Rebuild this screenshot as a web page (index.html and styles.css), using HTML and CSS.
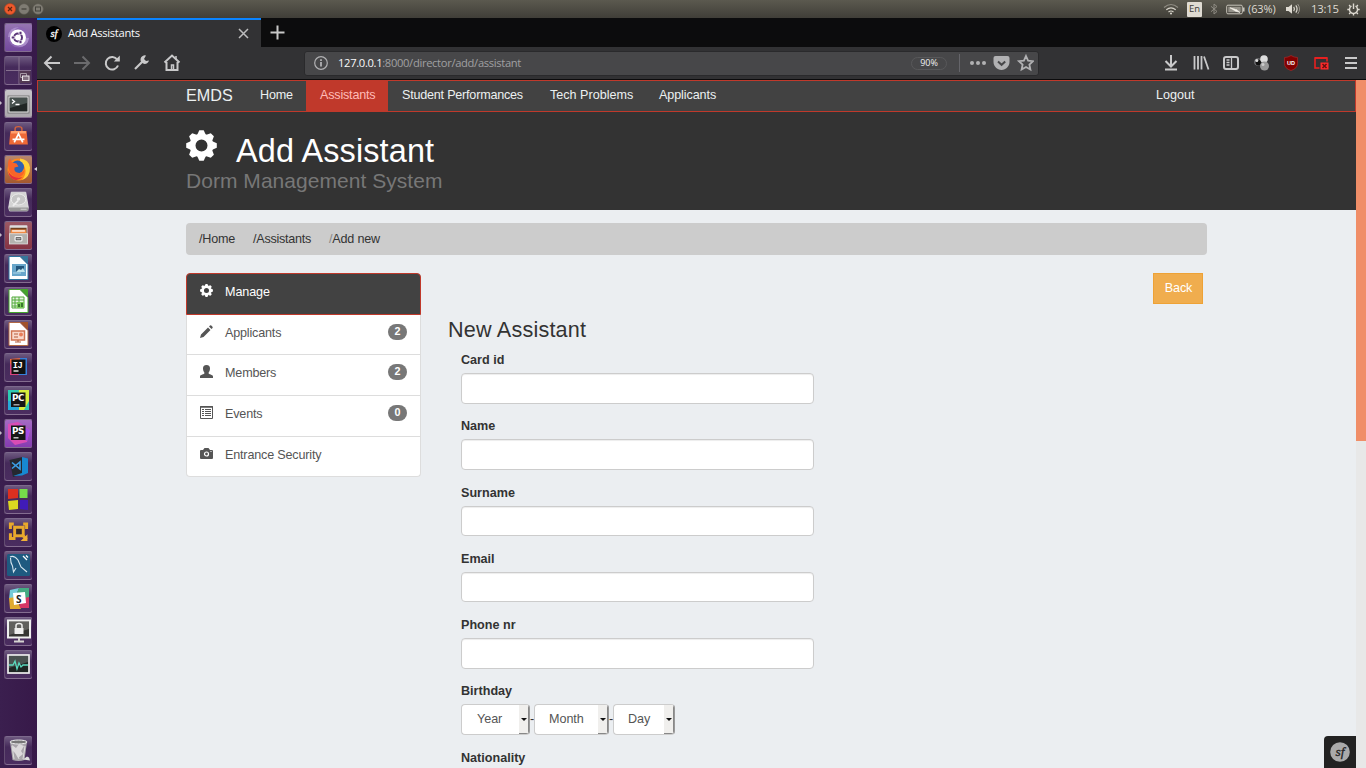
FILE: index.html
```html
<!DOCTYPE html>
<html lang="en">
<head>
<meta charset="utf-8">
<title>Add Assistants</title>
<link rel="stylesheet" href="styles.css">
</head>
<body>
<svg class="defs" aria-hidden="true">
  <symbol id="cog" viewBox="0 0 31 31">
    <circle cx="15.5" cy="15.5" r="8.9" fill="none" stroke="currentColor" stroke-width="5.8"/>
    <g fill="currentColor">
      <path id="tooth" d="M11 5.2 13.3 .2h4.400l2.300 5z"/>
      <use href="#tooth" transform="rotate(45 15.5 15.5)"/><use href="#tooth" transform="rotate(90 15.5 15.5)"/>
      <use href="#tooth" transform="rotate(135 15.5 15.5)"/><use href="#tooth" transform="rotate(180 15.5 15.5)"/>
      <use href="#tooth" transform="rotate(225 15.5 15.5)"/><use href="#tooth" transform="rotate(270 15.5 15.5)"/>
      <use href="#tooth" transform="rotate(315 15.5 15.5)"/>
    </g>
  </symbol>
</svg>
<div class="panel">
  <div class="winbtns">
    <svg width="46" height="18" viewBox="0 0 46 18"><circle cx="10" cy="9" r="5.5" fill="#ee5a2c" stroke="#b8401c" stroke-width=".6"/><path d="M8 7l4 4M12 7l-4 4" stroke="#5b2512" stroke-width="1.2"/><circle cx="24" cy="9" r="5.3" fill="#7f7c73" stroke="#5e5b53" stroke-width=".6"/><path d="M21.5 9h5" stroke="#45433d" stroke-width="1.3"/><circle cx="38" cy="9" r="5.3" fill="#7f7c73" stroke="#5e5b53" stroke-width=".6"/><rect x="35.5" y="7" width="5" height="4" fill="none" stroke="#45433d"/></svg>
  </div>
  <div class="tray">
    <svg width="16" height="12" viewBox="0 0 16 12" fill="none" stroke-width="1.2"><path d="M1 4.5q7-6 14 0" stroke="#8f8c83"/><path d="M3.3 6.8q4.7-4 9.4 0M5.5 9q2.5-2 5 0" stroke="#d8d4ca"/><circle cx="8" cy="10.6" r="1" fill="#dfdbd2"/></svg>
    <span class="lang">En</span>
    <svg class="bt" width="8" height="12" viewBox="0 0 8 12" fill="none" stroke="#8f8c83"><path d="M1 3.3l6 5.2-3 2.5V1l3 2.5-6 5.2"/></svg>
    <svg class="bat" width="19" height="11" viewBox="0 0 19 11"><rect x=".7" y="1.2" width="15.6" height="8.6" rx="1.2" fill="none" stroke="#c9c5bb" stroke-width="1"/><rect x="2.3" y="2.8" width="12.400" height="5.4" fill="#96938a"/><path d="M17.8 3.5v4" stroke="#dfdbd2" stroke-width="1.3"/><path d="M4 3.800l5 1.400v1.800l5 1.500-4-3.300-1.500 1.300z" fill="#f5f2ea" stroke="#f5f2ea" stroke-width=".6"/></svg>
    <span class="pct">(63%)</span>
    <svg class="vol" width="16" height="12" viewBox="0 0 16 12"><path d="M1 4h2.5L7 1.2v9.6L3.5 8H1z" fill="#dfdbd2"/><path d="M8.7 3.8q1.5 2.2 0 4.4M10.8 2.4q2.6 3.6 0 7.2" stroke="#dfdbd2" stroke-width="1.2" fill="none"/><path d="M12.7 1q3.6 5 0 10" stroke="#99958c" fill="none"/></svg>
    <span class="clock">13:15</span>
    <svg class="pow" width="13" height="13" viewBox="0 0 13 13" fill="none" stroke="#dfdbd2"><path d="M4.5 3a4 4 0 1 0 4 0" stroke-width="1.400"/><path d="M6.5.5v5.5" stroke-width="1.400"/><path d="M.3 6.5h2M10.7 6.5h2M6.5 10.6v2M2.1 2.1l1.3 1.3M10.9 2.1L9.6 3.4M2.1 10.9l1.4-1.4M10.9 10.9L9.5 9.5" stroke-width="1.400"/></svg>
  </div>
</div>
<div class="desktop">
<aside class="launcher">
  <div class="tile ubuntu"><svg viewBox="0 0 27 29"><circle cx="13.5" cy="14" r="10.5" fill="#8e68b4"/><path d="M3 14Q4 4 14 4q-7 3-7 10M24 15q-1 9-11 9 7-3 7-9" fill="#aa8dc9"/><circle cx="13" cy="14.5" r="8" fill="#fff"/><circle cx="13" cy="14.5" r="4" fill="none" stroke="#593477" stroke-width="2"/><g fill="#593477" stroke="#fff" stroke-width=".8"><circle cx="8" cy="14.5" r="1.7"/><circle cx="15.5" cy="10" r="1.7"/><circle cx="15.5" cy="19" r="1.7"/></g></svg></div>
  <div class="tile"><svg viewBox="0 0 27 29"><path d="M14 1v27M1 14.5h25" stroke="#86708e"/><rect x="14.5" y="15" width="11" height="12" fill="#523852"/><path d="M15.5 17.5h6v4h-6z" fill="none" stroke="#a598a4"/><rect x="17.5" y="20" width="6.5" height="4.5" fill="#827181" stroke="#ece7e9"/></svg></div>
  <div class="tile light run"><svg viewBox="0 0 27 29"><rect x="3" y="7" width="21" height="17" fill="#eee" stroke="#777"/><rect x="4.5" y="8.5" width="18" height="14" fill="#202624"/><path d="M5 9h17v5L5 19z" fill="#46504d"/><path d="M7 10.5l2.5 2L7 14.5M10.5 15.5h4" fill="none" stroke="#fff" stroke-width="1.3"/></svg></div>
  <div class="tile"><svg class="snug" viewBox="0 0 27 29"><path d="M9.5 9V6q0-2.5 4-2.5t4 2.5v3" fill="none" stroke="#d4633c" stroke-width="1.7"/><path d="M4 8.5h19l1.5 16h-22z" fill="#ee6937"/><path d="M5 8.5h17l.5 3h-18z" fill="#ffa06e"/><path d="M8.500 22l5-10 5 10M6.5 18.5h14" stroke="#fff" stroke-width="2" fill="none"/></svg></div>
  <div class="tile fox run active"><svg viewBox="0 0 27 29"><circle cx="13.500" cy="14.500" r="11" fill="#ff8a1c"/><path d="M15 3.500q9 1 10 9 0 10-8 12.500 5-6 3-12-1-4-5-5z" fill="#ffd138"/><circle cx="12.500" cy="12" r="6.500" fill="#2c62b4"/><path d="M3 8q0-3 2-4.500l2 4 4.500 1 2 3-4 1q-1 5 5 5.500 3-.5 5-3-1 7-7 7.500Q3 21 3 8" fill="#f8642a"/><path d="M3 12q-.5 6 4.500 9t10 1q-4 4.500-9 2.500-6-3-5.500-12.500" fill="#e3303c"/></svg></div>
  <div class="tile"><svg class="snug" viewBox="0 0 27 29"><path d="M5 3h17l3 18-1 4H3l-1-4z" fill="#d4d4d4" stroke="#e6e6e6"/><ellipse cx="13.500" cy="11.500" rx="8.500" ry="6.500" fill="#c6c6c6" stroke="#eee"/><circle cx="13.500" cy="11" r="2" fill="#eee"/><path d="M2 21h23v4H3z" fill="#999"/><path d="M16 23h7" stroke="#ddd"/><path d="M13 13l-6 6" stroke="#eee" stroke-width="2"/></svg></div>
  <div class="tile files run"><svg class="snug" viewBox="0 0 27 29"><rect x="3" y="3" width="21" height="21" rx="1" fill="#ddd"/><path d="M4 6h19v7H4z" fill="#714120"/><path d="M5 8h17l1 6H4z" fill="#f08b45"/><path d="M6 9h15v1.500H6z" fill="#fff"/><rect x="3" y="13" width="21" height="12" fill="#b3b2ae" stroke="#ddd"/><rect x="9.500" y="16.500" width="8" height="5" rx="1" fill="#444" stroke="#f2f2f2" stroke-width="1.500"/><path d="M11 19h5" stroke="#fff"/></svg></div>
  <div class="tile"><svg viewBox="0 0 27 29"><path d="M4 2.500h11l8 8v15H4z" fill="#fff" stroke="#2c759e"/><path d="M15 2h8v8z" fill="#36769b"/><rect x="7" y="10" width="14" height="12" fill="#68a6ca"/><path d="M11 12h8v6h-8z" fill="#23557b"/><path d="M11 18l3-3 2 1 2-2 2 4z" fill="#c0e5eb"/><path d="M8 19h8" stroke="#b0d6e9"/></svg></div>
  <div class="tile"><svg viewBox="0 0 27 29"><path d="M4 2.500h11l8 8v15H4z" fill="#fff" stroke="#43a52c"/><path d="M15 2h8v8z" fill="#44a52c"/><path d="M7 10h12v11H7z" fill="#e7f3e1" stroke="#52aa3d"/><path d="M7 13h12M7 16h12M7 19h12M10 10v11M14 10v11" stroke="#52aa3d"/><path d="M12 15h7v6h-7z" fill="#79ca57"/><path d="M14 20v-3m3 3v-4" stroke="#245c22" stroke-width="1.500"/></svg></div>
  <div class="tile"><svg viewBox="0 0 27 29"><path d="M4 2.500h11l8 8v15H4z" fill="#fff" stroke="#b16844"/><path d="M15 2h8v8z" fill="#a1532c"/><rect x="6.500" y="11" width="13" height="9" fill="#f9d8cb" stroke="#cf7351" stroke-width="1.500"/><path d="M9 14h4M9 17h4M13 20v2M10 22h6" stroke="#b35c3c"/><circle cx="16" cy="14.500" r="2" fill="#e87e5a"/></svg></div>
  <div class="tile"><svg viewBox="0 0 27 29"><path d="M5 6l11-1 6 7-6 10-11-1z" fill="#f36c42"/><path d="M15 5h7v17h-9z" fill="#387fda"/><path d="M5 10v12h9z" fill="#d8437f"/><rect x="6.500" y="6.500" width="14" height="14.500" fill="#111"/><text x="7.800" y="14.500" class="ide ij">IJ</text><path d="M8.500 18h5" stroke="#fff" stroke-width="1.300"/></svg></div>
  <div class="tile"><svg viewBox="0 0 27 29"><path d="M3 4h21v20H3z" fill="#2dcbb3"/><path d="M14 4h10v11l-5 9h-7z" fill="#d8ee3b"/><path d="M3 15h11v9H3z" fill="#27a9d9"/><rect x="6" y="6.500" width="14.500" height="14.500" fill="#161616"/><text x="7" y="15" class="ide">PC</text><path d="M8.500 18.800h6" stroke="#bbb" stroke-width="1.300"/></svg></div>
  <div class="tile ps run"><svg viewBox="0 0 27 29"><path d="M3 5l10-2 12 8-3 12-12 3L3 19z" fill="#d94cb4"/><path d="M14 5l11 6-3 11-11-6z" fill="#a34ce8"/><rect x="6" y="6.500" width="14.500" height="14.500" fill="#161616"/><text x="7" y="14.800" class="ide">PS</text><path d="M8.500 18.800h5" stroke="#ddd" stroke-width="1.300"/></svg></div>
  <div class="tile"><svg viewBox="0 0 27 29"><path d="M4.500 8l13-3v17L8 25z" fill="#252830"/><path d="M17 5l6 1.500v14.500l-6 2.500-9 .5 9-3z" fill="#1788d1"/><path d="M7 10.500l8 6.500V10l-8 6.500" fill="none" stroke="#3c9ee5" stroke-width="1.600"/></svg></div>
  <div class="tile"><svg viewBox="0 0 27 29"><path d="M3 4h10v9L3 14z" fill="#dc3020"/><path d="M14.500 4h8v9h-8z" fill="#76dc4a"/><path d="M3 16l10-1v9l-9 1z" fill="#dcd820"/><path d="M15 15h8v10l-8-1z" fill="#401bb8"/></svg></div>
  <div class="tile"><svg class="snug" viewBox="0 0 27 29"><g fill="none" stroke="#e8a92c" stroke-width="3.500"><path d="M9 9h10v10H9z"/><path d="M8 5H4v6M19 5h4v6M4 16v6h6M19 19l4 4"/></g><path d="M24 17v8h-8z" fill="#f0b038"/><path d="M11 11h6v6h-6z" fill="#352a27"/></svg></div>
  <div class="tile"><svg viewBox="0 0 27 29"><rect x="2" y="3" width="23" height="22" rx="1.500" fill="#1e5a80"/><path d="M5 6q4-2 8 3l3 7 6 5M5.500 7q0 5 2 8l1 6 2.500-4" fill="none" stroke="#d6e6ef" stroke-width="1.100"/><path d="M18 5l4 4M21 4.500l2 2" stroke="#fff" stroke-width="1.300"/></svg></div>
  <div class="tile"><svg viewBox="0 0 27 29"><path d="M5 6l9-2-4 10-6 1z" fill="#76cad8"/><path d="M14 4h10v11L10 14z" fill="#45ab83"/><path d="M4 14l7-1 5 12H5z" fill="#e1aa30"/><path d="M14 15l10-2v11h-9z" fill="#d63665"/><path d="M8 9l12-1 1 11-12 2z" fill="#fff"/><text x="11" y="18.500" class="slack">S</text></svg></div>
  <div class="tile"><svg viewBox="0 0 27 29"><rect x="3" y="3.500" width="22" height="17" fill="#353533" stroke="#eee" stroke-width="2"/><path d="M4 5h20v7L4 18z" fill="#60605e"/><rect x="9.500" y="11" width="9" height="6" fill="#eee"/><path d="M11 11V8.500Q11 6.500 14 6.500t3 2V11" fill="none" stroke="#eee" stroke-width="1.500"/><path d="M14 21v3M9 24.500h10" stroke="#d5d3d1" stroke-width="2"/></svg></div>
  <div class="tile"><svg viewBox="0 0 27 29"><rect x="3" y="5" width="21" height="18" fill="#1e2523" stroke="#eee" stroke-width="1.700"/><path d="M4 6h19v6L4 18z" fill="#49514f"/><path d="M4 15h4l2-4 2 8 2-6 2 4 2-2h5" fill="none" stroke="#5bd8bd" stroke-width="1.300"/></svg></div>
  <div class="tile trash"><svg viewBox="0 0 27 29"><path d="M5 6h17l-2.500 18q-6 2-12 0z" fill="#a9a5aa"/><ellipse cx="13.500" cy="6" rx="8.500" ry="2" fill="#777" stroke="#eee"/><path d="M7 9l4 3 3-4 5 2-3 5 2 3-5 4-3-5-2-2z" fill="#e5e2e4" opacity=".85"/><path d="M7 10l2 13M20 10l-2 13M12 17l2 6" stroke="#ddd"/><path d="M18 23.500l4-3 2 1 1 3z" fill="#ddd"/></svg></div>
</aside>
<main class="browser">
  <div class="tabs">
    <div class="tab">
      <svg class="sf" width="16" height="16" viewBox="0 0 16 16"><circle cx="8" cy="8" r="8" fill="#000"/><text x="8" y="11" text-anchor="middle">sf</text></svg>
      <span class="tabname">Add Assistants</span>
      <svg class="x" width="11" height="11" viewBox="0 0 11 11"><path d="M1 1l9 9M10 1l-9 9" stroke="#bdbdbe" stroke-width="1.500"/></svg>
    </div>
    <svg class="plus" width="15" height="15" viewBox="0 0 15 15"><path d="M7.500 .5v14M.5 7.500h14" stroke="#c8c8c8" stroke-width="2"/></svg>
  </div>
  <div class="toolbar">
    <svg class="nav" width="150" height="32" viewBox="0 0 150 32" fill="none" stroke="#c9c9ca" stroke-width="2"><path d="M23 16H9M14.500 9.500L8 16l6.500 6.500"/><path d="M37 16h14M45.500 9.500L52 16l-6.500 6.500" stroke="#6b6b6d"/><path d="M81 18.500a6.300 6.300 0 1 1-.7-5.800"/><path d="M82.800 8.500v6h-6z" fill="#c9c9ca" stroke="none"/><path d="M98 22l7-7" stroke-width="2.200"/><path d="M109 8.500a4.300 4.300 0 1 0 3 5l-3 .5-2-2z" fill="#c9c9ca" stroke="none"/><path d="M127.500 15.500L135 8.500l7.500 7M129.500 15v8h11v-8"/><path d="M134.500 23v-5h2v5M139 12V9" stroke-width="1.500"/></svg>
    <div class="url">
      <svg width="14" height="14" viewBox="0 0 14 14"><circle cx="7" cy="7" r="6.300" fill="none" stroke="#b1b1b3" stroke-width="1.200"/><path d="M7 6v4.500M7 3.200v1.700" stroke="#b1b1b3" stroke-width="1.800"/></svg>
      <span class="address"><b>127.0.0.1</b>:8000/director/add/assistant</span>
      <span class="zoom">90%</span>
      <svg class="urlicons" width="80" height="24" viewBox="0 0 80 24"><path d="M5.500 3v18" stroke="#65656a"/><g fill="#b1b1b3"><circle cx="18" cy="12" r="2"/><circle cx="24" cy="12" r="2"/><circle cx="30" cy="12" r="2"/><path d="M41.500 5h12q2 0 2 2v4c0 4-3.500 8-8 8s-8-4-8-8V7q0-2 2-2z"/></g><path d="M44 10.500l3.600 3.300 3.600-3.300" fill="none" stroke="#474749" stroke-width="2"/><path d="M72 5l2.100 4.600 5 .6-3.700 3.400 1 4.900-4.400-2.500-4.400 2.500 1-4.900-3.700-3.400 5-.6z" fill="none" stroke="#b1b1b3" stroke-width="1.800"/></svg>
    </div>
    <svg class="exts" width="196" height="32" viewBox="0 0 196 32" fill="none" stroke="#c9c9ca" stroke-width="2"><path d="M7 8v11M1.500 14L7 19.500 12.500 14M1 22.500h12"/><path d="M30.500 9v13.500M34 9v13.500M37.500 9v13.500M40 9.500l4.500 13" stroke-width="1.800"/><rect x="60" y="10" width="14" height="12" rx="2"/><path d="M67.500 10v12M62.500 13h3M62.500 15.500h3M62.500 18h3" stroke-width="1.300"/><g stroke="none"><circle cx="94" cy="15" r="3.800" fill="#77777a"/><circle cx="94.500" cy="15.500" r="3" fill="#111"/><circle cx="92.800" cy="13.500" r="1.500" fill="#ddd"/><circle cx="100" cy="12" r="3.800" fill="#ddd"/><circle cx="100.500" cy="19" r="4.500" fill="#999"/><circle cx="99" cy="17.500" r="1.500" fill="#ccc"/></g><path d="M127 8.500q-3 2-6.500 2v6q0 5 6.500 7 6.500-2 6.500-7v-6q-3.500 0-6.500-2z" fill="#800000" stroke="#a12626" stroke-width=".8"/><text x="127" y="18" class="ub">UD</text><rect x="151" y="11" width="12" height="10" stroke="#e82020" stroke-width="1.600"/><path d="M151 11h12" stroke="#e82020" stroke-width="2"/><path d="M156 15h9v8h-9z" fill="#ff2a2a" stroke="#323234" stroke-width="1"/><path d="M158.500 17l4 4M162.500 17l-4 4" stroke="#651010" stroke-width="1.500"/><path d="M181 11h12M181 16h12M181 21h12"/></svg>
  </div>
  <div class="viewport">
    <div class="page">
      <nav class="navbar"><span class="brand">EMDS</span><span class="n1">Home</span><span class="n2">Assistants</span><span class="n3">Student Performances</span><span class="n4">Tech Problems</span><span class="n5">Applicants</span><span class="logout">Logout</span></nav>
      <header class="hero">
        <h1><svg width="31" height="31"><use href="#cog"/></svg><span class="title">Add Assistant</span></h1>
        <p><span>Dorm Management System</span></p>
      </header>
      <div class="crumbs"><span><i>/</i>Home</span><span><i>/</i>Assistants</span><span><i class="dim">/</i>Add new</span></div>
      <div class="columns">
        <div class="side">
          <div class="item head"><svg width="13" height="13"><use href="#cog"/></svg><span>Manage</span></div>
          <div class="item"><svg width="13" height="13" viewBox="0 0 13 13" fill="#555"><path d="M0 13l1-3.500 7-7 2.500 2.500-7 7zM9 1.500L10 .5q.8-.5 1.300 0l1.200 1.200q.5.700 0 1.300l-1 1z"/></svg><span>Applicants</span><b>2</b></div>
          <div class="item r2"><svg width="13" height="13" viewBox="0 0 13 13" fill="#555"><path d="M6.500 0C9 0 10 1.500 10 3.500 10 6 9 6.500 8.500 8c0 1.500 4.500 1.500 4.500 3.500V13H0v-1.500C0 9.500 4.500 9.500 4.500 8 4 6.500 3 6 3 3.500 3 1.500 4 0 6.500 0z"/></svg><span>Members</span><b>2</b></div>
          <div class="item r2"><svg width="13" height="13" viewBox="0 0 13 13" fill="none" stroke="#555"><path d="M.5 .5h12v12H.5z"/><path d="M0 1h13" stroke-width="1.500"/><path d="M2 3.500h2M2 5.500h2M2 7.500h2M2 9.500h2M5 3.500h6M5 5.500h6M5 7.500h6M5 9.500h6"/></svg><span>Events</span><b>0</b></div>
          <div class="item last"><svg width="13" height="13" viewBox="0 0 13 13"><path d="M1 3h2l1.500-2h4L10 3h2q1 0 1 1v7q0 1-1 1H1q-1 0-1-1V4q0-1 1-1z" fill="#555"/><circle cx="6.500" cy="7" r="2" fill="none" stroke="#fff" stroke-width="1.200"/><path d="M10.500 4.500h1" stroke="#fff"/></svg><span>Entrance Security</span></div>
        </div>
        <div class="content">
          <div class="actions"><span class="back">Back</span></div>
          <h2><span>New Assistant</span></h2>
          <form class="form">
            <div class="field"><label><span>Card id</span></label><input type="text"></div>
            <div class="field"><label><span>Name</span></label><input type="text"></div>
            <div class="field"><label><span>Surname</span></label><input type="text"></div>
            <div class="field"><label><span>Email</span></label><input type="text"></div>
            <div class="field"><label><span>Phone nr</span></label><input type="text"></div>
            <div class="field"><label><span>Birthday</span></label>
              <div class="date"><div class="sel year"><span>Year</span><em></em></div><u>-</u><div class="sel month"><span>Month</span><em></em></div><u>-</u><div class="sel day"><span>Day</span><em></em></div></div></div>
            <div class="field tail"><label><span>Nationality</span></label></div>
          </form>
        </div>
      </div>
    </div>
    <div class="scroll"><div class="thumb"></div></div>
    <div class="sfbar"><svg width="20" height="20" viewBox="0 0 20 20"><circle cx="10" cy="10" r="9.800" fill="#aaa"/><text x="10" y="14" text-anchor="middle">sf</text></svg></div>
  </div>
</main>
</div>
</body>
</html>
```
FILE: styles.css
```css
* { box-sizing: border-box; }
body { margin: 0; width: 1366px; height: 768px; overflow: hidden; font: 12.6px/18px "Liberation Sans", Arial, sans-serif; color: #333; background: #ebeef1; }
svg { display: block; flex: none; }
.defs { position: absolute; width: 0; height: 0; }
span { white-space: nowrap; }
.panel { height: 18px; display: flex; justify-content: space-between; background: linear-gradient(#5b594f, #403e38); font-family: "Open Sans", "Noto Sans", sans-serif; }
.tray { display: flex; align-items: center; height: 18px; color: #dfdbd2; font-size: 11.5px; padding-right: 6px; }
.lang { width: 15px; height: 15px; margin-left: 8px; background: #dfdbd2; color: #3c3b37; font-size: 9.5px; line-height: 14px; text-align: center; border-radius: 1px; }
.bt { margin-left: 8px; }
.bat { margin-left: 8px; }
.pct { width: 28px; margin-left: 3px; font-size: 11px; letter-spacing: -0.1px; line-height: 18px; }
.vol { margin-left: 9px; }
.clock { width: 28px; margin-left: 10px; font-size: 11.3px; letter-spacing: -0.2px; }
.pow { margin-left: 8px; }
.desktop { display: flex; height: 750px; }
.launcher { width: 37px; padding: 5px 0 0 5px; background: linear-gradient(90deg, #3b1f4f, #371949); display: flex; flex-direction: column; gap: 4px; }
.tile { position: relative; width: 27px; height: 29px; flex: none; border-radius: 2px; background: linear-gradient(#715d83, #452a5a 38%, #4b2d60); box-shadow: -1px 0 #624c70, inset 0 -1px #846d90, inset 0 1px #7c698c; }
.tile svg { width: 27px; height: 29px; }
.tile svg.snug { padding: 1px 2px 2px; }
.tile.ubuntu { background: linear-gradient(#9776b3, #71479b); }
.tile.light { background: linear-gradient(#c9c7ca, #aaa6ab); }
.tile.fox { background: linear-gradient(#b98970, #a4572c); }
.tile.files { background: linear-gradient(#9c5965, #853242); }
.tile.ps { background: linear-gradient(#a66cc4, #843ab0); }
.tile.trash { margin-top: 53px; }
.run::before { content: ""; position: absolute; left: -5px; top: 12px; border: 2px solid transparent; border-left: 2px solid #c5bdca; border-right: 0; }
.active::after { content: ""; position: absolute; right: -5px; top: 12px; border: 2px solid transparent; border-right: 3px solid #d8d2dc; border-left: 0; }
.ide { font: bold 8.8px "DejaVu Sans", sans-serif; fill: #fff; letter-spacing: -0.5px; }
.ide.ij { font-family: "Liberation Mono", monospace; }
.slack { font: bold 10px "Open Sans", sans-serif; fill: #222; }
.browser { width: 1329px; display: flex; flex-direction: column; font-family: "Open Sans", sans-serif; }
.tabs { height: 29px; background: #0c0c0d; display: flex; align-items: center; }
.tab { width: 224px; height: 29px; border-top: 2px solid #0a84ff; background: #323234; display: flex; align-items: center; padding: 0 12px 0 9px; }
.sf text { font: italic 10.5px "Liberation Serif", serif; fill: #fff; stroke: #fff; stroke-width: .3px; }
.tabname { margin-left: 6px; flex: 1; padding-bottom: 2px; color: #f9f9fa; font-size: 11.2px; letter-spacing: -0.3px; }
.plus { margin-left: 9px; }
.toolbar { height: 33px; background: #323234; border-bottom: 1px solid #0c0c0d; display: flex; }
.url { width: 735px; height: 25px; margin: 4px 0 0 117px; background: #474749; border: 1px solid #2a2a2c; border-radius: 3px; display: flex; align-items: center; padding: 0 0 1px 9px; }
.address { margin-left: 10px; width: 573px; color: #a0a0a2; font-size: 11.2px; letter-spacing: -0.33px; }
.address b { font-weight: 400; color: #f9f9fa; }
.zoom { width: 36px; height: 13px; border: 1px solid #58585a; border-radius: 7px; font-size: 9px; line-height: 10px; text-align: center; color: #f0f0f0; }
.urlicons { margin-left: 7px; }
.exts { margin-left: 125px; }
.ub { font: bold 5.5px "Liberation Sans", sans-serif; fill: #fff; stroke: none; text-anchor: middle; }
.viewport { position: relative; height: 688px; display: flex; font-family: "Liberation Sans", Arial, sans-serif; }
.page { width: 1319px; background: #ebeef1; }
.navbar { height: 32px; border: 1px solid #c0392b; background: #424242; display: flex; padding-left: 148px; line-height: 28px; color: #ecf0f1; letter-spacing: -0.2px; }
.navbar span { height: 30px; }
.navbar .brand { width: 74px; font-size: 16.2px; line-height: 29px; letter-spacing: 0; }
.n1 { width: 46px; }
.n2 { width: 82px; padding-left: 14px; background: #c0392b; color: #ffbcb8; }
.navbar .n3 { width: 162px; padding-left: 14px; letter-spacing: -0.22px; }
.navbar .n4 { width: 109px; letter-spacing: 0; }
.navbar .n5 { width: 497px; letter-spacing: -0.1px; }
.navbar .logout { letter-spacing: 0; }
.hero { height: 98px; background: #333; padding: 18px 0 0 149px; }
h1 { margin: 0; display: flex; height: 39px; color: #fff; font-weight: 400; font-size: 32.4px; line-height: 42px; letter-spacing: 0.15px; }
.title { margin-left: 19px; }
.hero p { margin: 0; color: #777; font-size: 21px; line-height: 24px; letter-spacing: 0.04px; }
.crumbs { height: 32px; width: 1021px; margin: 13px 0 0 149px; background: #ccc; border-radius: 4px; display: flex; gap: 18px; padding: 0 13px; line-height: 32px; letter-spacing: -0.2px; }
.crumbs span:nth-child(2) { letter-spacing: -0.27px; }
.crumbs i { font-style: normal; }
.crumbs .dim { color: #888; }
.columns { display: flex; margin: 18px 0 0 149px; }
.side { width: 235px; height: 204px; }
.item { height: 40px; border: solid #ddd; border-width: 0 1px 1px; background: #fff; color: #555; display: flex; padding: 10px 13px 0; }
.item span { margin-left: 12px; line-height: 17px; flex: 1; letter-spacing: -0.18px; }
.item b { width: 19px; height: 16px; border-radius: 9px; background: #777; color: #fff; font-size: 10.8px; line-height: 15px; text-align: center; }
.item:nth-child(2) b { margin-top: -1px; }
.item.r2 { height: 41px; }
.item.r2 b { margin-top: -1px; }
.item.last { height: 40px; border-radius: 0 0 4px 4px; }
.item.head { height: 42px; background: #424242; border: 1px solid #c0392b; border-radius: 4px 4px 0 0; color: #fff; padding-top: 10px; }
.item.head span { letter-spacing: -0.1px; }
.content { width: 786px; padding-left: 27px; }
.actions { display: flex; justify-content: flex-end; padding-right: 4px; }
.back { width: 50px; height: 31px; padding-left: 1px; background: #f0ad4e; border: 1px solid #eea236; color: #fff; text-align: center; line-height: 28px; letter-spacing: -0.1px; }
h2 { margin: 12px 0 0; font-size: 21.6px; font-weight: 400; line-height: 28px; letter-spacing: 0.2px; }
.form { padding: 6px 0 0 13px; }
.field { height: 66.25px; }
.field.tail { height: 24px; }
label { display: block; font-weight: 700; height: 23px; line-height: 20.9px; }
input { display: block; width: 353px; height: 30.5px; border: 1px solid #ccc; border-radius: 4px; background: #fff; box-shadow: inset 0 1px 1px rgba(0,0,0,.075); }
.date { display: flex; }
.date u { width: 4px; text-decoration: none; line-height: 30px; text-align: center; }
.sel { height: 31px; border: 1px solid #ccc; border-right-color: #999; border-radius: 4px; background: #fff; display: flex; justify-content: space-between; color: #555; line-height: 28px; padding-left: 15px; overflow: hidden; letter-spacing: -0.05px; }
.year { width: 69px; }
.month { width: 75px; padding-left: 14px; }
.day { width: 62px; padding-left: 14px; }
.sel em { width: 10px; background: #f0efed; border: solid #888; border-width: 0 1px 1px 0; display: flex; align-items: center; justify-content: center; }
.sel em::after { content: ""; border: 3px solid transparent; border-top-color: #111; border-bottom: 0; }
.scroll { width: 10px; background: #e8e8e8; }
.thumb { height: 361px; background: #f08e68; }
.sfbar { position: absolute; left: 1287px; bottom: 0; width: 32px; height: 32px; background: #222; border-radius: 4px 0 0 0; padding: 6px; }
.sfbar text { font: italic 13.5px "Liberation Serif", serif; fill: #222; stroke: #222; stroke-width: .3px; }
```
